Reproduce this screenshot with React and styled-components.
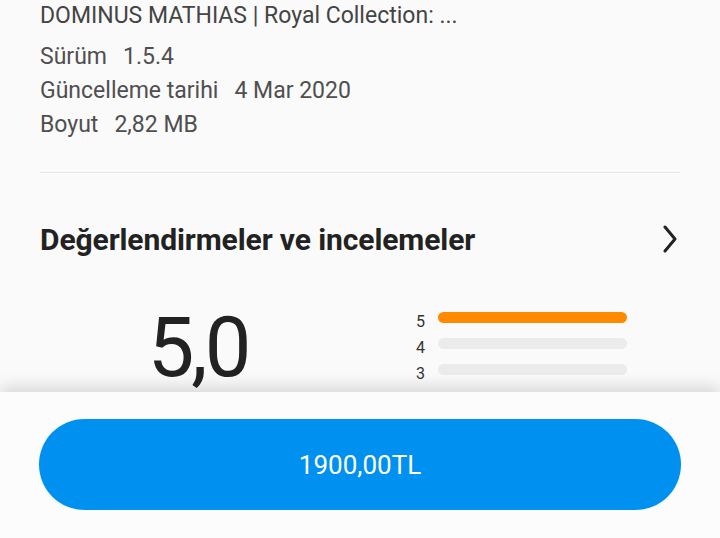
import styled, { createGlobalStyle } from 'styled-components';

const GlobalStyle = createGlobalStyle`
  html, body {
    margin: 0;
    padding: 0;
    background: #fafafa;
    font-family: Roboto, "Noto Sans", sans-serif;
  }
`

const Screen = styled.div`
  width: 720px;
  height: 538px;
  display: flex;
  flex-direction: column;
  overflow: hidden;
  background: #fafafa;
`

const Content = styled.div`
  height: 392px;
  overflow: hidden;
  padding: 0 40px;
  box-sizing: border-box;
`

const AppName = styled.div`
  font-size: 23px;
  line-height: 32px;
  color: #444;
  margin-bottom: 8px;
`

const InfoLine = styled.div`
  font-size: 23px;
  line-height: 34px;
  color: #4f4f4f;

  span {
    margin-left: 16px;
  }
`

const Divider = styled.div`
  height: 1px;
  background: #e6e6e6;
  margin-top: 30px;
`

const HeaderRow = styled.div`
  display: flex;
  align-items: center;
  justify-content: space-between;
  height: 40px;
  margin-top: 46px;
`

const Title = styled.h2`
  margin: 0;
  font-size: 30px;
  font-weight: 700;
  color: #222;
  letter-spacing: -0.1px;
`

const RatingRow = styled.div`
  display: flex;
  margin-top: 30px;
`

const Score = styled.div`
  width: 316px;
  text-align: center;
  font-size: 83px;
  line-height: 84px;
  color: #222;
  letter-spacing: -3px;
  margin-top: 17px;
`

const Bars = styled.div`
  margin-left: 60px;
  display: flex;
  flex-direction: column;
  gap: 6px;
  padding-top: 18px;
`

const BarRow = styled.div`
  display: flex;
  align-items: center;
  height: 20px;
`

const BarLabel = styled.span`
  width: 22px;
  font-size: 16px;
  color: #333;
  padding-top: 8px;
`

const Bar = styled.div`
  width: 189px;
  height: 11px;
  border-radius: 6px;
  background: ${(p) => (p.$fill ? '#ff8a00' : '#ebebeb')};
`

const BottomBar = styled.div`
  position: relative;
  z-index: 1;
  flex: 1;
  background: #fcfcfc;
  box-shadow: 0 -6px 14px rgba(0, 0, 0, 0.13);
  padding: 27px 39px 0;
`

const BuyButton = styled.button`
  width: 100%;
  height: 91px;
  border: none;
  border-radius: 46px;
  background: #0091f0;
  color: #fff;
  font-family: Roboto, sans-serif;
  font-size: 26px;
  letter-spacing: 0;
  cursor: pointer;
`

const Chevron = () => (
  <svg width="20" height="28" viewBox="0 0 20 28" fill="none">
    <path d="M5 2 L15 14 L5 26" stroke="#222" strokeWidth="3" strokeLinecap="round" strokeLinejoin="round" />
  </svg>
)

const rows = [
  { n: 5, fill: true },
  { n: 4, fill: false },
  { n: 3, fill: false },
]

const App = () => {
  return (
    <Screen>
      <GlobalStyle />
      <Content>
        <AppName>DOMINUS MATHIAS | Royal Collection: ...</AppName>
        <InfoLine>Sürüm<span>1.5.4</span></InfoLine>
        <InfoLine>Güncelleme tarihi<span>4 Mar 2020</span></InfoLine>
        <InfoLine>Boyut<span>2,82 MB</span></InfoLine>
        <Divider />
        <HeaderRow>
          <Title>Değerlendirmeler ve incelemeler</Title>
          <Chevron />
        </HeaderRow>
        <RatingRow>
          <Score>5,0</Score>
          <Bars>
            {rows.map((r) => (
              <BarRow key={r.n}>
                <BarLabel>{r.n}</BarLabel>
                <Bar $fill={r.fill} />
              </BarRow>
            ))}
          </Bars>
        </RatingRow>
      </Content>
      <BottomBar>
        <BuyButton>1900,00TL</BuyButton>
      </BottomBar>
    </Screen>
  )
}

export default App;
